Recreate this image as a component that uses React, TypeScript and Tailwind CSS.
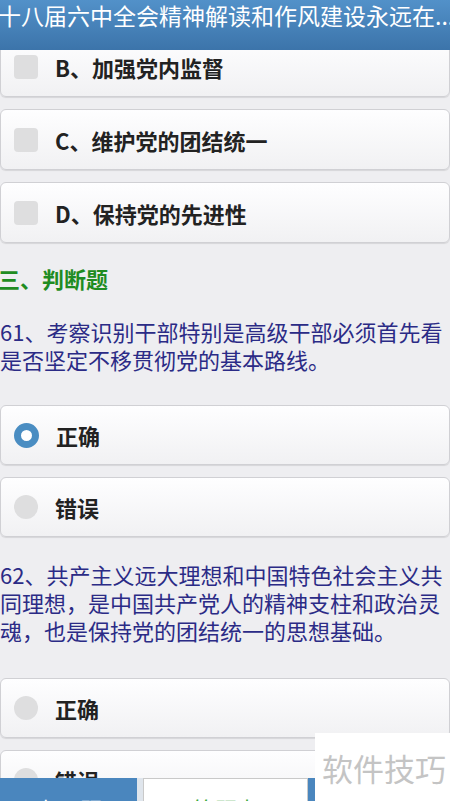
import React from 'react'

type Mark = 'box' | 'radio' | 'radioOn'

function OptionCard({ mark, label, h = 'h-[61px]' }: { mark: Mark; label: string; h?: string }) {
  return (
    <div
      className={`${h} flex items-center rounded-[6px] border border-[#d0d0d4] bg-linear-to-b from-[#fefeff] to-[#f1f1f3] shadow-[0_1px_1px_rgba(0,0,0,0.10)]`}
    >
      {mark === 'box' && <div className="ml-[13px] h-[24px] w-[24px] rounded-[4px] bg-[#dededf]" />}
      {mark === 'radio' && <div className="ml-[13px] h-[24px] w-[24px] rounded-full bg-[#dededf]" />}
      {mark === 'radioOn' && (
        <div className="ml-[13px] h-[25px] w-[25px] rounded-full border-[7px] border-[#4a8dc2] bg-white" />
      )}
      <span className="ml-[17px] text-[22px] leading-[28px] font-bold text-[#222222]">{label}</span>
    </div>
  )
}

function Question({ text }: { text: string }) {
  return <p className="text-[22px] leading-[28px] text-[#2b2b86]">{text}</p>
}

export default function App() {
  return (
    <div className="relative flex h-[801px] w-[450px] flex-col overflow-hidden bg-[#eeeef1] font-['Noto_Sans_CJK_SC','Noto_Sans',sans-serif]">
      {/* title bar */}
      <header className="h-[50px] shrink-0 overflow-hidden bg-linear-to-b from-[#5291c9] to-[#3c74aa]">
        <h1 className="-ml-[2px] whitespace-nowrap pt-[1px] text-[23px] leading-[28px] text-white">
          十八届六中全会精神解读和作风建设永远在...
        </h1>
      </header>

      {/* scrolled content */}
      <main className="min-h-0 flex-1 overflow-hidden">
        <div className="-mt-[14px] flex flex-col">
          <div className="flex flex-col gap-[12px]">
            <OptionCard mark="box" label="B、加强党内监督" />
            <OptionCard mark="box" label="C、维护党的团结统一" />
            <OptionCard mark="box" label="D、保持党的先进性" />
          </div>

          <h2 className="-ml-[2px] mt-[21px] text-[22px] leading-[28px] font-bold text-[#1f8c22]">三、判断题</h2>

          <div className="mt-[25px]">
            <Question text="61、考察识别干部特别是高级干部必须首先看是否坚定不移贯彻党的基本路线。" />
          </div>

          <div className="mt-[32px] flex flex-col gap-[12px]">
            <OptionCard mark="radioOn" label="正确" h="h-[60px]" />
            <OptionCard mark="radio" label="错误" h="h-[60px]" />
          </div>

          <div className="mt-[23px]">
            <Question text="62、共产主义远大理想和中国特色社会主义共同理想，是中国共产党人的精神支柱和政治灵魂，也是保持党的团结统一的思想基础。" />
          </div>

          <div className="mt-[34px] flex flex-col gap-[12px]">
            <OptionCard mark="radio" label="正确" h="h-[60px]" />
            <OptionCard mark="radio" label="错误" h="h-[60px]" />
          </div>
        </div>
      </main>

      {/* bottom bar, only its top edge is on screen */}
      <footer className="flex h-[23px] shrink-0 items-start bg-[#4a86be]">
        <div className="flex h-[60px] w-[137px] items-center justify-center text-[22px] text-white">上一题</div>
        <div className="h-[60px] w-[6px] bg-[#dfe5ec]" />
        <div className="flex h-[60px] w-[165px] items-center justify-center border border-[#c9c9c9] bg-white text-[22px] text-[#3aa83a]">
          答题卡
        </div>
      </footer>

      {/* watermark */}
      <div className="absolute bottom-0 right-0 flex h-[68px] w-[135px] items-center bg-white pl-[7px]">
        <span className="text-[31px] leading-none text-[#c4c4c4]">软件技巧</span>
      </div>
    </div>
  )
}
